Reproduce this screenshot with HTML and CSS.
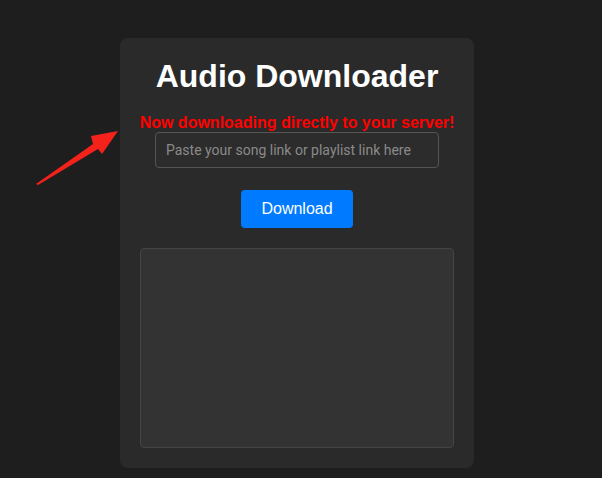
FILE: index.html
```html
<!DOCTYPE html>
<html>
<head>
    <title>Audio Downloader</title>
    <link rel="stylesheet" href="styles.css">
</head>
<body>
    <svg class="arrow" width="100" height="70" viewBox="0 0 100 70">
        <polygon points="6,64 63,24 61,16 88,11 72,34 68,29 8,65" fill="#f5221b"/>
    </svg>

    <div class="container">
        <h1>Audio Downloader</h1>
        <p class="notice">Now downloading directly to your server!</p>
        <input type="text" class="link-input" placeholder="Paste your song link or playlist link here">
        <button class="download-btn">Download</button>
        <div class="output"></div>
    </div>
</body>
</html>
```

FILE: styles.css
```css
body {
    font-family: 'Liberation Sans', Arial, sans-serif;
    background-color: #1e1e1e;
    color: white;
    margin: 0;
    padding: 38px 8px 0 0;
    position: relative;
    height: 440px;
    overflow: hidden;
}
.arrow {
    position: absolute;
    left: 30px;
    top: 120px;
}
.container {
    width: 354px;
    box-sizing: border-box;
    margin: 0 auto;
    padding: 20px;
    background-color: #2a2a2a;
    border-radius: 8px;
    display: flex;
    flex-direction: column;
    align-items: center;
}
h1 {
    font-size: 32px;
    font-weight: bold;
    margin: 0;
    line-height: 37px;
    color: #fff;
}
.notice {
    color: #ff0000;
    font-weight: bold;
    font-size: 16px;
    margin: 19px -10px 0;
    line-height: 18px;
    white-space: nowrap;
}
.link-input {
    width: 284px;
    height: 36px;
    box-sizing: border-box;
    margin-top: 0;
    padding: 8px 10px;
    background-color: #2c2c2c;
    border: 1px solid #555;
    border-radius: 4px;
    color: #ddd;
    font-family: Roboto, Arial, sans-serif;
    font-size: 14px;
}
.link-input::placeholder {
    color: #8a8a8a;
}
.download-btn {
    margin-top: 22px;
    width: 112px;
    height: 38px;
    background-color: #007bff;
    color: white;
    border: none;
    border-radius: 4px;
    font-family: 'Liberation Sans', Arial, sans-serif;
    font-size: 16px;
}
.output {
    margin-top: 20px;
    width: 314px;
    height: 200px;
    box-sizing: border-box;
    background-color: #333;
    border: 1px solid #444;
    border-radius: 4px;
}
```
